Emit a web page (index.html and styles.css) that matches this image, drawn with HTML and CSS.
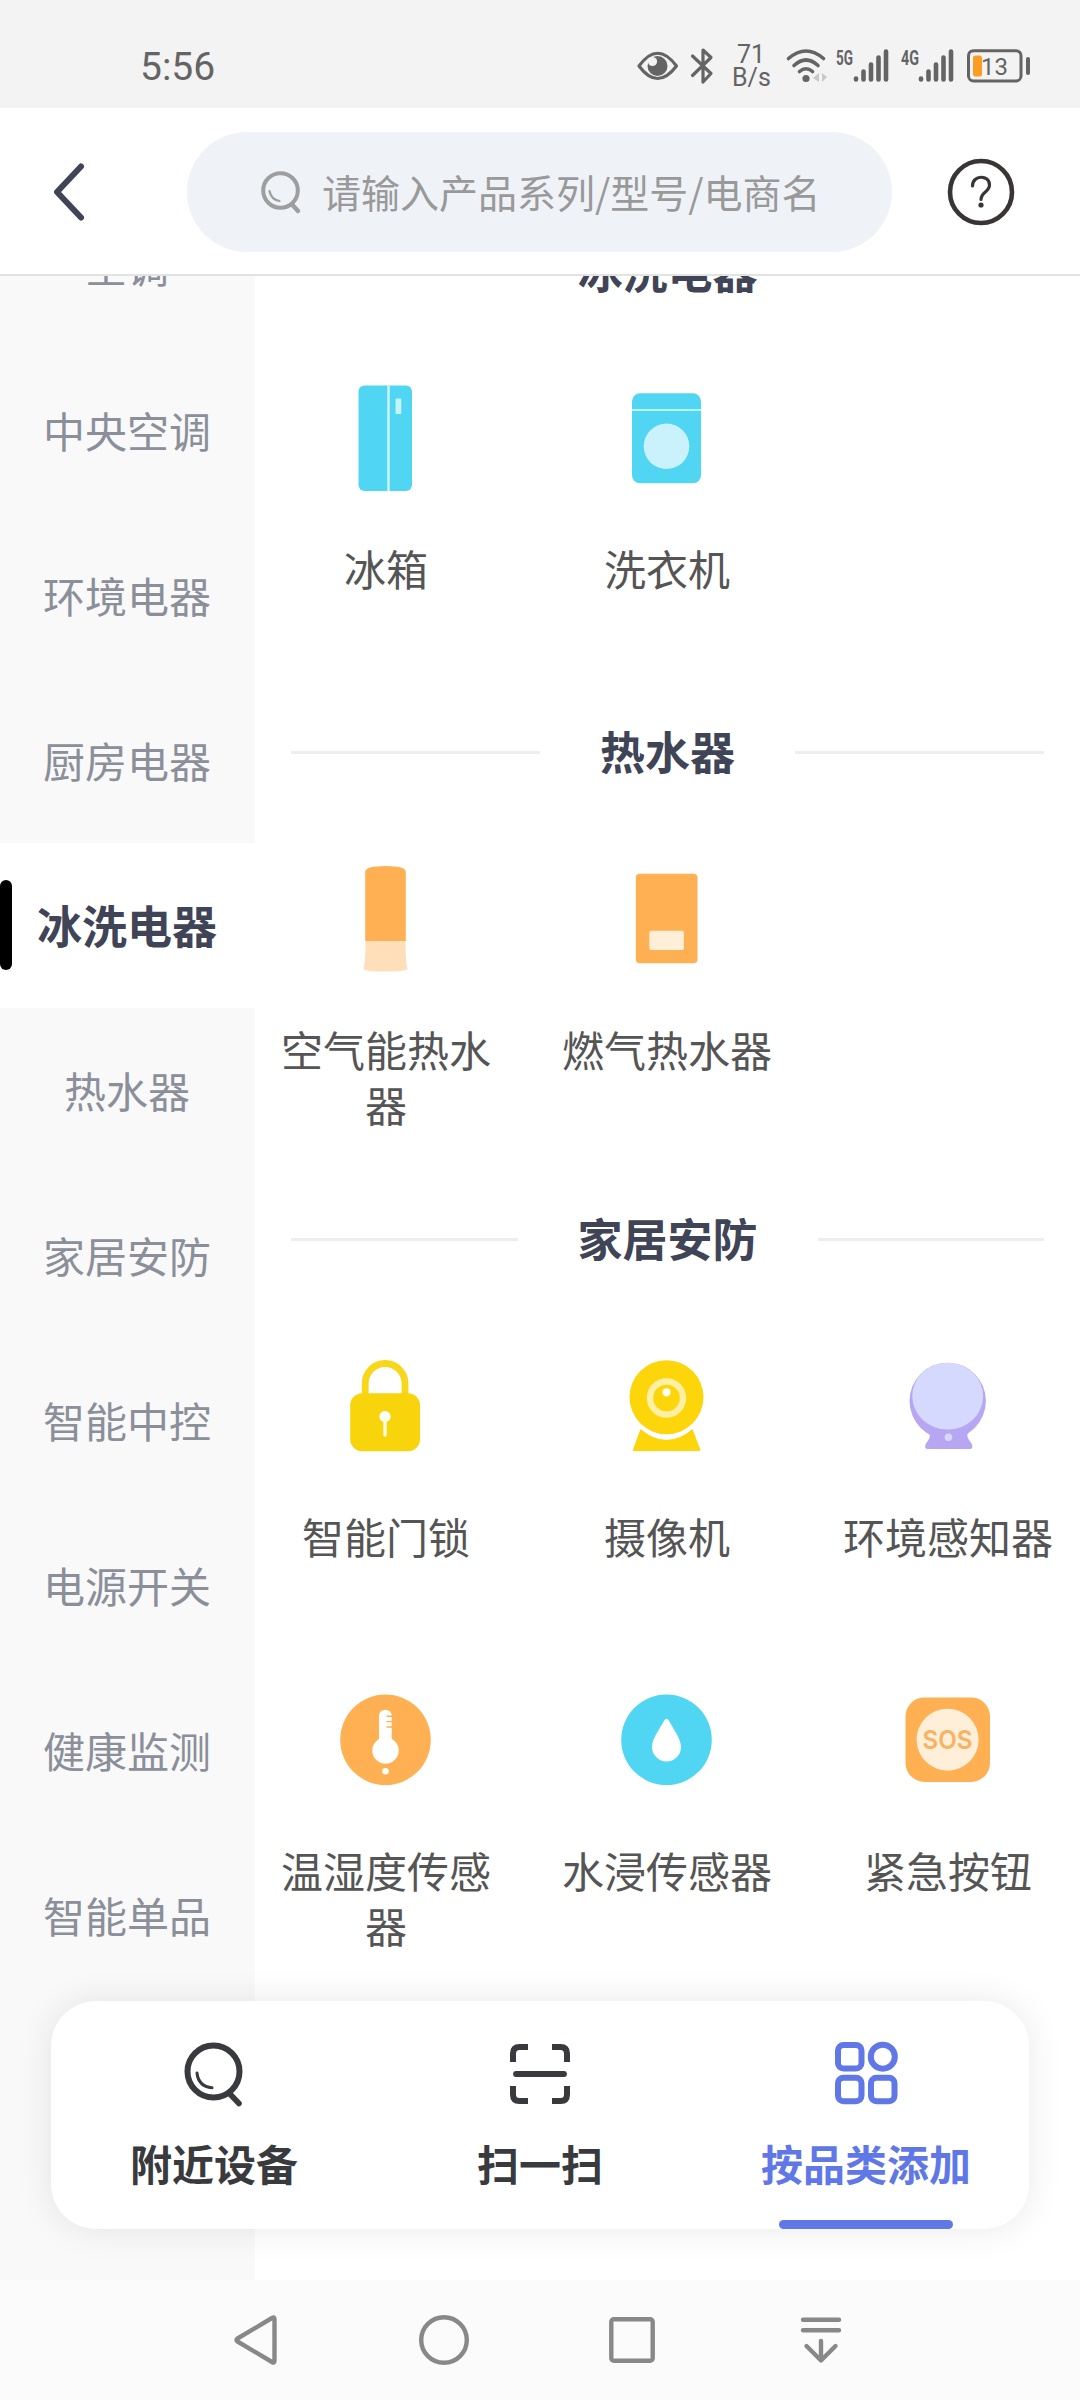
FILE: index.html
```html
<!DOCTYPE html>
<html lang="zh-CN">
<head>
    <meta charset="UTF-8">
    <meta name="viewport" content="width=device-width, initial-scale=1.0">
    <title>添加设备</title>
    <link rel="stylesheet" href="styles.css">
</head>
<body>
    <div class="app">
        <!-- Status bar -->
        <div class="status-bar">
            <span class="time">5:56</span>
            <div class="status-icons">
                <svg class="eye" width="42" height="30" viewBox="0 0 42 30">
                    <path d="M2 15Q20.500-10.500 39.500 15Q20.500 40 2 15Z" fill="none" stroke="#646464" stroke-width="3.200" stroke-linejoin="round"/>
                    <circle cx="20.500" cy="15" r="10" fill="#646464"/>
                    <circle cx="15.500" cy="10.500" r="4.600" fill="#f3f3f3"/>
                </svg>
                <svg class="bluetooth" width="24" height="38" viewBox="0 0 24 38">
                    <path d="M2.500 9L21 26.500L13 35V3L21 10.500L2.500 28.500" fill="none" stroke="#646464" stroke-width="3.200" stroke-linejoin="round" stroke-linecap="round"/>
                </svg>
                <span class="speed">71<br>B/s</span>
                <svg class="wifi" width="42" height="36" viewBox="0 0 42 36">
                    <path d="M2.500 10.500Q20 -4.500 37.500 10.500M8 17.500Q20 6.500 32 17.500M13.500 23.500Q20 18 26.500 23.500" fill="none" stroke="#646464" stroke-width="3.600" stroke-linecap="round"/>
                    <circle cx="20" cy="30.500" r="3.600" fill="#646464"/>
                    <path d="M33 25V34L27 30ZM36 25V34L41 29Z" fill="#c8c8c8"/>
                </svg>
                <svg class="signal" width="54" height="36" viewBox="0 0 54 36">
                    <text x="0" y="16.500" textLength="17" lengthAdjust="spacingAndGlyphs">5G</text>
                    <path d="M20 30.500V31.500M27.500 23.500V31.500M35 16.500V31.500M42.500 9.500V31.500M50 3.500V31.500"/>
                </svg>
                <svg class="signal" width="54" height="36" viewBox="0 0 54 36">
                    <text x="0" y="16.500" textLength="18" lengthAdjust="spacingAndGlyphs">4G</text>
                    <path d="M20 30.500V31.500M27.500 23.500V31.500M35 16.500V31.500M42.500 9.500V31.500M50 3.500V31.500"/>
                </svg>
                <svg class="battery" width="64" height="34" viewBox="0 0 64 34">
                    <rect x="1.500" y="1.700" width="52.500" height="30.300" rx="5" fill="none" stroke="#646464" stroke-width="3"/>
                    <rect x="6" y="6.500" width="9" height="21" rx="2.500" fill="#fb9d22"/>
                    <text x="14" y="25.500" font-size="24">13</text>
                    <rect x="59" y="8" width="4" height="18" rx="2" fill="#646464"/>
                </svg>
            </div>
        </div>

        <!-- Header with search -->
        <header class="header">
            <svg class="back" width="36" height="62" viewBox="0 0 36 62">
                <path d="M30 5.500L6 31L30 56.500" fill="none" stroke="#3f4456" stroke-width="6" stroke-linecap="round" stroke-linejoin="round"/>
            </svg>
            <div class="search">
                <svg width="40" height="43" viewBox="0 0 40 43">
                    <circle cx="19.500" cy="19.500" r="17.300" fill="none" stroke="#9e9e9e" stroke-width="4"/>
                    <path d="M8.500 20Q10 28.500 18.500 30" fill="none" stroke="#9e9e9e" stroke-width="2.200" stroke-linecap="round"/>
                    <path d="M31.500 34L37 40" stroke="#9e9e9e" stroke-width="4.400" stroke-linecap="round"/>
                </svg>
                <span>请输入产品系列/型号/电商名</span>
            </div>
            <svg class="help" width="68" height="68" viewBox="0 0 68 68">
                <circle cx="34" cy="34" r="31" fill="none" stroke="#383534" stroke-width="4.600"/>
                <path d="M25.500 28C25.500 16.500 42.500 16.500 42.500 27C42.500 34 34 34 34 41.500" fill="none" stroke="#383534" stroke-width="3.200" stroke-linecap="round"/>
                <circle cx="34" cy="47" r="2.600" fill="#383534"/>
            </svg>
        </header>

        <div class="body">
            <!-- Category list -->
            <nav class="sidebar">
                <div class="category">空调</div>
                <div class="category">中央空调</div>
                <div class="category">环境电器</div>
                <div class="category">厨房电器</div>
                <div class="category active">冰洗电器</div>
                <div class="category">热水器</div>
                <div class="category">家居安防</div>
                <div class="category">智能中控</div>
                <div class="category">电源开关</div>
                <div class="category">健康监测</div>
                <div class="category">智能单品</div>
            </nav>

            <!-- Product list -->
            <main class="content">
                <section>
                    <h2>冰洗电器</h2>
                    <div class="products">
                        <div class="product">
                            <svg viewBox="0 0 120 120">
                                <rect x="32.500" y="7.500" width="53.500" height="105.500" rx="6" fill="#50d5f3"/>
                                <path d="M62.500 7.500V113" stroke="#d0f6ff" stroke-width="2.400"/>
                                <rect x="69.500" y="20.500" width="5.800" height="15.500" rx="1" fill="#c4f4fd"/>
                            </svg>
                            <p>冰箱</p>
                        </div>
                        <div class="product">
                            <svg viewBox="0 0 120 120">
                                <rect x="25" y="15.300" width="69" height="90" rx="8" fill="#50d5f3"/>
                                <path d="M25 32H94" stroke="#b4f6ff" stroke-width="2"/>
                                <circle cx="59.500" cy="68.300" r="22.800" fill="#c9f2fc"/>
                            </svg>
                            <p>洗衣机</p>
                        </div>
                    </div>
                </section>

                <section>
                    <h2>热水器</h2>
                    <div class="products">
                        <div class="product">
                            <svg viewBox="0 0 120 120">
                                <path d="M39.500 82H79.500C79.500 95 80 104 81.500 110Q80 112.500 59.500 112.500Q39 112.500 37.500 110C39 104 39.500 95 39.500 82Z" fill="#ffdfba"/>
                                <path d="M39.200 82V13Q39.200 7 59.500 7Q79.800 7 79.800 13V82Z" fill="#ffb053"/>
                            </svg>
                            <p>空气能热水器</p>
                        </div>
                        <div class="product">
                            <svg viewBox="0 0 120 120">
                                <rect x="28.800" y="14.700" width="61.700" height="89.600" rx="4" fill="#ffb053"/>
                                <rect x="42.300" y="71.700" width="34.600" height="19.300" rx="2" fill="#ffefd8"/>
                            </svg>
                            <p>燃气热水器</p>
                        </div>
                    </div>
                </section>

                <section>
                    <h2>家居安防</h2>
                    <div class="products">
                        <div class="product">
                            <svg viewBox="0 0 120 120">
                                <path d="M39.200 50V37.500A19.900 20 0 0 1 79 37.500V50" fill="none" stroke="#f8d619" stroke-width="6.800"/>
                                <rect x="24.200" y="47.300" width="69.800" height="58" rx="12" fill="#f8d40d"/>
                                <circle cx="59" cy="70.500" r="5.600" fill="#fff"/>
                                <path d="M59 72V89" stroke="#fffbe0" stroke-width="3.400" stroke-linecap="round"/>
                            </svg>
                            <p>智能门锁</p>
                        </div>
                        <div class="product">
                            <svg viewBox="0 0 120 120">
                                <path d="M33.500 83Q59.500 105 85.500 83L93.300 103.500Q93.500 105 92 105H27Q25.500 105 26 103.500Z" fill="#fdd50b"/>
                                <circle cx="59.500" cy="51.200" r="37" fill="#fdd50b"/>
                                <circle cx="59.500" cy="52" r="16.500" fill="none" stroke="#fff0a4" stroke-width="6.400"/>
                                <circle cx="59.500" cy="46.300" r="4.100" fill="#fffdf0"/>
                            </svg>
                            <p>摄像机</p>
                        </div>
                        <div class="product">
                            <svg viewBox="0 0 120 120">
                                <circle cx="59.700" cy="54.900" r="38.200" fill="#b7a7f2"/>
                                <path d="M40 86Q44.500 89.500 38 97.500Q35.500 103 40 103H81.500Q86 103 83.500 97.500Q77 89.500 80.500 86Z" fill="#b7a7f2"/>
                                <ellipse cx="59.700" cy="50.100" rx="35.400" ry="33.400" fill="#d6d9fe"/>
                                <circle cx="60.500" cy="91.300" r="3.800" fill="#d6d9fe"/>
                            </svg>
                            <p>环境感知器</p>
                        </div>
                        <div class="product">
                            <svg viewBox="0 0 120 120">
                                <circle cx="59.500" cy="59.800" r="45.300" fill="#ffb053"/>
                                <circle cx="59.500" cy="70.500" r="13.200" fill="#fff"/>
                                <rect x="53" y="29.700" width="12.700" height="40" rx="6.300" fill="#fff"/>
                                <path d="M60.500 36.300H66M60.500 41.600H66M60.500 47H66" stroke="#ffb053" stroke-width="1.400"/>
                                <circle cx="59.500" cy="91.300" r="3.300" fill="#fff"/>
                            </svg>
                            <p>温湿度传感器</p>
                        </div>
                        <div class="product">
                            <svg viewBox="0 0 120 120">
                                <circle cx="59.500" cy="59.800" r="45.300" fill="#50d5f3"/>
                                <path d="M57.200 40.500Q59.500 37 61.800 40.500C67 50 74 59 74 67A14.500 14.500 0 0 1 45 67C45 59 52 50 57.200 40.500Z" fill="#fff"/>
                            </svg>
                            <p>水浸传感器</p>
                        </div>
                        <div class="product">
                            <svg viewBox="0 0 120 120">
                                <rect x="17.500" y="17.400" width="84.500" height="84.500" rx="19" fill="#ffb053"/>
                                <circle cx="59.600" cy="59.700" r="31" fill="#ffefd8"/>
                                <text class="sos" x="59.600" y="69" textLength="50" lengthAdjust="spacingAndGlyphs">SOS</text>
                            </svg>
                            <p>紧急按钮</p>
                        </div>
                    </div>
                </section>
            </main>

            <!-- Floating tab bar -->
            <div class="tabs">
                <div class="tab">
                    <svg viewBox="0 0 72 72">
                        <circle cx="35.500" cy="34.500" r="26" fill="none" stroke="#393a3e" stroke-width="6"/>
                        <path d="M19 36Q20.500 49.500 34 50.800" fill="none" stroke="#393a3e" stroke-width="3" stroke-linecap="round"/>
                        <path d="M52 57L61 66.500" stroke="#393a3e" stroke-width="5.600" stroke-linecap="round"/>
                    </svg>
                    <span>附近设备</span>
                </div>
                <div class="tab">
                    <svg viewBox="0 0 72 72">
                        <path d="M24 10H15.500Q9 10 9 16.500V25M48 10H56.500Q63 10 63 16.500V25M24 64H15.500Q9 64 9 57.500V49M48 64H56.500Q63 64 63 57.500V49" fill="none" stroke="#393a3e" stroke-width="6"/>
                        <path d="M12 37H60" stroke="#393a3e" stroke-width="5.800" stroke-linecap="round"/>
                    </svg>
                    <span>扫一扫</span>
                </div>
                <div class="tab selected">
                    <svg viewBox="0 0 72 72">
                        <g fill="none" stroke="#6077e8" stroke-width="6">
                            <rect x="8" y="8" width="23.500" height="23.500" rx="5.500"/>
                            <circle cx="52.800" cy="19.700" r="12"/>
                            <rect x="8" y="40.800" width="23.500" height="23.500" rx="5.500"/>
                            <rect x="41" y="40.800" width="23.500" height="23.500" rx="5.500"/>
                        </g>
                    </svg>
                    <span>按品类添加</span>
                </div>
            </div>
        </div>

        <!-- System navigation -->
        <div class="system-nav">
            <svg viewBox="0 0 60 60">
                <path d="M48.500 9V51Q48.500 53.500 46 52L11.500 31.500Q9.500 30 11.500 28.500L46 8Q48.500 6.500 48.500 9Z"/>
            </svg>
            <svg viewBox="0 0 60 60">
                <circle cx="30" cy="30" r="22.800"/>
            </svg>
            <svg viewBox="0 0 60 60">
                <rect x="9.300" y="9.300" width="41.400" height="41.400" rx="2.500"/>
            </svg>
            <svg viewBox="0 0 60 60">
                <path d="M13 9.700H49M13 20.300H49M31 31V50M16.500 36L31 50.500L45.500 36"/>
            </svg>
        </div>
    </div>
</body>
</html>
```

FILE: styles.css
```css
/* General Styles */
* {
    box-sizing: border-box;
}

body {
    margin: 0;
    font-family: "Noto Sans CJK SC", sans-serif;
    background-color: #fff;
}

svg {
    display: block;
    flex-shrink: 0;
    overflow: visible;
}

.app {
    display: flex;
    flex-direction: column;
    width: 1080px;
    height: 2400px;
    overflow: hidden;
}

/* Status bar */
.status-bar {
    display: flex;
    justify-content: space-between;
    height: 108px;
    padding: 0 49px 0 140px;
    background-color: #f3f3f3;
    color: #646464;
    font-family: Roboto, sans-serif;
}

.time {
    margin-top: 44px;
    font-size: 39px;
    line-height: 46px;
}

.status-icons {
    display: flex;
    align-items: center;
    padding-top: 23px;
}

.status-icons text {
    fill: #646464;
    font-family: Roboto, sans-serif;
}

.bluetooth {
    margin-left: 11px;
}

.speed {
    width: 38px;
    margin-left: 18px;
    font-size: 25px;
    line-height: 23px;
    text-align: center;
}

.wifi {
    margin-left: 16px;
}

.signal {
    margin-left: 8px;
}

.signal + .signal {
    margin-left: 11px;
}

.signal text {
    font-size: 21px;
    font-weight: bold;
}

.signal path {
    stroke: #646464;
    stroke-width: 4.6;
    stroke-linecap: round;
}

.battery {
    margin-left: 12px;
}

/* Header */
.header {
    display: flex;
    align-items: center;
    flex-shrink: 0;
    height: 168px;
    padding: 2px 65px 0 51px;
    border-bottom: 2px solid #e3e3e3;
}

.search {
    display: flex;
    align-items: center;
    width: 705px;
    height: 120px;
    margin-left: 100px;
    padding-left: 74px;
    border-radius: 60px;
    background-color: #eff3f8;
    color: #999;
    font-size: 39px;
    white-space: nowrap;
}

.search span {
    margin-left: 21px;
    padding-bottom: 2px;
}

.help {
    margin-left: auto;
}

/* Scrolled area */
.body {
    position: relative;
    display: flex;
    flex: 1;
    min-height: 0;
    overflow: hidden;
}

.sidebar {
    width: 255px;
    background-color: #f9f9f9;
}

.category {
    height: 165px;
    padding-right: 1px;
    color: #8a8f99;
    font-size: 42px;
    line-height: 164px;
    text-align: center;
}

.category:first-child {
    margin-top: -93px;
}

.category.active {
    position: relative;
    background-color: #fff;
    color: #3f4456;
    font-size: 45px;
    font-weight: bold;
}

.category.active::before {
    content: "";
    position: absolute;
    left: 0;
    top: 37px;
    width: 12px;
    height: 90px;
    border-radius: 6px;
    background-color: #000;
}

.content {
    flex: 1;
    margin-top: -92px;
    padding-right: 1px;
}

section {
    padding-top: 57px;
}

h2 {
    display: flex;
    align-items: center;
    gap: 60px;
    height: 61px;
    margin: 0 35px 29px 36px;
    padding-bottom: 3px;
    color: #3f4456;
    font-size: 45px;
    line-height: 58px;
}

h2::before,
h2::after {
    content: "";
    flex: 1;
    height: 3px;
    margin-top: 3px;
    background-color: #eee;
}

.products {
    display: grid;
    grid-template-columns: repeat(3, 212px);
    justify-content: center;
    column-gap: 69px;
}

.product {
    display: flex;
    flex-direction: column;
    align-items: center;
    min-height: 334px;
    padding: 47px 0 21px;
}

.product svg {
    width: 120px;
    height: 120px;
}

.product p {
    margin: 42px 0 0;
    color: #555;
    font-size: 42px;
    line-height: 55px;
    text-align: center;
}

.sos {
    fill: #f8b262;
    font-family: Inter, sans-serif;
    font-size: 26px;
    font-weight: 600;
    text-anchor: middle;
}

/* Floating tab bar */
.tabs {
    position: absolute;
    left: 51px;
    right: 51px;
    bottom: 51px;
    display: flex;
    height: 228px;
    border-radius: 45px;
    background-color: #fff;
    box-shadow: 0 0 36px rgba(0, 0, 0, 0.09);
}

.tab {
    position: relative;
    display: flex;
    flex: 1;
    flex-direction: column;
    align-items: center;
    padding-top: 36px;
    color: #393a3e;
    font-size: 42px;
    font-weight: bold;
    line-height: 60px;
}

.tab svg {
    width: 72px;
    height: 72px;
    margin-bottom: 24px;
}

.tab.selected {
    color: #6077e8;
}

.tab.selected::after {
    content: "";
    position: absolute;
    left: 76px;
    bottom: 0;
    width: 174px;
    height: 9px;
    border-radius: 5px;
    background-color: #6077e8;
}

/* System navigation */
.system-nav {
    display: flex;
    align-items: center;
    flex-shrink: 0;
    gap: 128px;
    height: 120px;
    padding-left: 226px;
    background-color: #fbfbfb;
}

.system-nav svg {
    width: 60px;
    height: 60px;
    fill: none;
    stroke: #888;
    stroke-width: 4.4;
    stroke-linecap: round;
    stroke-linejoin: round;
}
```
